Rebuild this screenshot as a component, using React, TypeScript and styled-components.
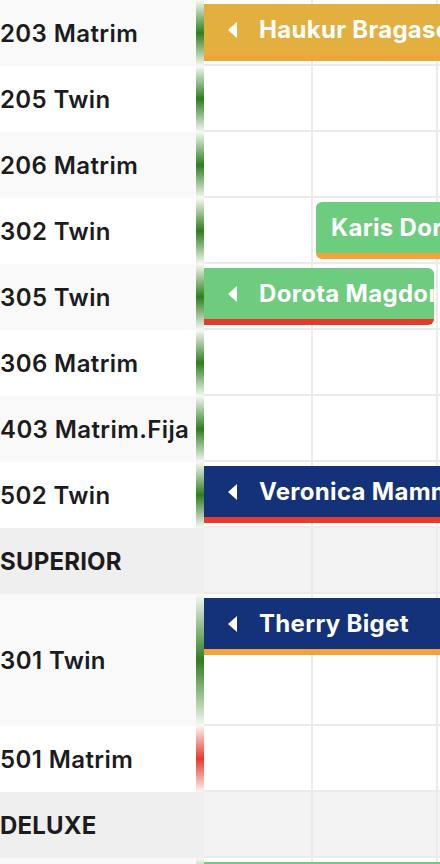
import styled, { createGlobalStyle } from "styled-components"

type Tone = "yellow" | "green" | "navy"
type Edge = "orange" | "red"

interface Booking {
    guest: string;
    left: number;
    width: number;
    tone: Tone;
    edge: Edge;
    continued?: boolean;
}

interface RoomRow {
    kind: "room" | "group";
    name: string;
    lanes?: number;
    shaded?: boolean;
    status?: "ok" | "dirty";
    bookings?: Booking[];
}

const rows: RoomRow[] = [
    { kind: "room", name: "203 Matrim", shaded: true, status: "ok", bookings: [
        { guest: "Haukur Bragason", left: 0, width: 300, tone: "yellow", edge: "orange", continued: true },
    ] },
    { kind: "room", name: "205 Twin", status: "ok" },
    { kind: "room", name: "206 Matrim", shaded: true, status: "ok" },
    { kind: "room", name: "302 Twin", status: "ok", bookings: [
        { guest: "Karis Dorsey", left: 112, width: 200, tone: "green", edge: "orange" },
    ] },
    { kind: "room", name: "305 Twin", shaded: true, status: "ok", bookings: [
        { guest: "Dorota Magdonska", left: 0, width: 230, tone: "green", edge: "red", continued: true },
    ] },
    { kind: "room", name: "306 Matrim", status: "ok" },
    { kind: "room", name: "403 Matrim.Fija", shaded: true, status: "ok" },
    { kind: "room", name: "502 Twin", status: "ok", bookings: [
        { guest: "Veronica Mammoliti", left: 0, width: 300, tone: "navy", edge: "red", continued: true },
    ] },
    { kind: "group", name: "SUPERIOR" },
    { kind: "room", name: "301 Twin", lanes: 2, shaded: true, status: "ok", bookings: [
        { guest: "Therry Biget", left: 0, width: 300, tone: "navy", edge: "orange", continued: true },
    ] },
    { kind: "room", name: "501 Matrim", status: "dirty" },
    { kind: "group", name: "DELUXE" },
    { kind: "room", name: "503 Matrim", shaded: true, status: "ok", bookings: [
        { guest: "Lina Ortega", left: 0, width: 300, tone: "green", edge: "orange", continued: true },
    ] },
]

const columns = [109, 125, 125]

const toneColors: Record<Tone, string> = {
    yellow: "#e3b03f",
    green: "#6dcc7d",
    navy: "#14327a",
}

const edgeColors: Record<Edge, string> = {
    orange: "#f2a33a",
    red: "#e8392a",
}

const GlobalStyle = createGlobalStyle`
    html, body {
        margin: 0;
        padding: 0;
        background: #ffffff;
        overflow: hidden;
    }
    body {
        font-family: "Inter", "Liberation Sans", sans-serif;
        -webkit-font-smoothing: antialiased;
    }
`

const CaretLeft = () => (
    <svg width="10" height="16" viewBox="0 0 10 16">
        <path d="M9 0 L9 16 L0 8 Z" fill="#ffffff" />
    </svg>
)

export default function App() {
    return (
        <>
            <GlobalStyle />
            <Planner>
                {rows.map(row => {
                    const height = 66 * (row.lanes ?? 1)
                    if (row.kind === "group") {
                        return (
                            <Row key={row.name} $height={height}>
                                <GroupLabel>{row.name}</GroupLabel>
                                <GridCells $group>
                                    {columns.map((w, c) => <Cell key={c} $width={w} />)}
                                </GridCells>
                            </Row>
                        )
                    }
                    return (
                        <Row key={row.name} $height={height}>
                            <RoomLabel $shaded={!!row.shaded}>{row.name}</RoomLabel>
                            <StatusBar $status={row.status ?? "ok"} />
                            <GridCells>
                                {columns.map((w, c) => <Cell key={c} $width={w} />)}
                                {row.bookings?.map(b => (
                                    <Bar
                                        key={b.guest}
                                        $tone={b.tone}
                                        $edge={b.edge}
                                        $continued={!!b.continued}
                                        style={{ left: b.left, width: b.width }}
                                    >
                                        {b.continued && <CaretSlot><CaretLeft /></CaretSlot>}
                                        <Guest>{b.guest}</Guest>
                                    </Bar>
                                ))}
                            </GridCells>
                        </Row>
                    )
                })}
            </Planner>
        </>
    )
}

const Planner = styled.div`
    width: 440px;
    height: 864px;
    overflow: hidden;
    display: flex;
    flex-direction: column;
`

const Row = styled.div<{ $height: number }>`
    display: flex;
    flex-shrink: 0;
    height: ${p => p.$height}px;
`

const RoomLabel = styled.div<{ $shaded: boolean }>`
    width: 196px;
    flex-shrink: 0;
    display: flex;
    align-items: center;
    background: ${p => (p.$shaded ? "#f9f9f9" : "#ffffff")};
    color: #1c1c1e;
    font-size: 24px;
    font-weight: 600;
    letter-spacing: 0.4px;
    white-space: nowrap;
    overflow: hidden;
`

const GroupLabel = styled.div`
    width: 204px;
    flex-shrink: 0;
    display: flex;
    align-items: center;
    background: #efefef;
    color: #1c1c1e;
    font-size: 24px;
    font-weight: 700;
    letter-spacing: 0.2px;
`

const StatusBar = styled.div<{ $status: "ok" | "dirty" }>`
    width: 8px;
    flex-shrink: 0;
    background: ${p =>
        p.$status === "ok"
            ? "linear-gradient(to bottom, rgba(46,125,30,0.04), #2e7d1e 50%, rgba(46,125,30,0.04))"
            : "linear-gradient(to bottom, rgba(232,57,42,0.06), #e8392a 50%, rgba(232,57,42,0.06))"};
`

const GridCells = styled.div<{ $group?: boolean }>`
    position: relative;
    flex: 1;
    display: flex;
    overflow: hidden;
    background: ${p => (p.$group ? "#f3f3f3" : "#ffffff")};
    border-bottom: 2px solid #ebebeb;
`

const Cell = styled.div<{ $width: number }>`
    width: ${p => p.$width}px;
    flex-shrink: 0;
    box-sizing: border-box;
    border-right: 2px solid #ebebeb;
`

const Bar = styled.div<{ $tone: Tone; $edge: Edge; $continued: boolean }>`
    position: absolute;
    top: 4px;
    height: 57px;
    box-sizing: border-box;
    display: flex;
    align-items: center;
    padding-left: ${p => (p.$continued ? 24 : 15)}px;
    background: ${p => toneColors[p.$tone]};
    border-bottom: 6px solid ${p => edgeColors[p.$edge]};
    border-radius: ${p => (p.$continued ? "0 6px 6px 0" : "6px")};
    overflow: hidden;
`

const CaretSlot = styled.span`
    display: flex;
    width: 31px;
    flex-shrink: 0;
`

const Guest = styled.span`
    color: #ffffff;
    font-size: 24px;
    font-weight: 700;
    letter-spacing: 0.3px;
    white-space: nowrap;
`
